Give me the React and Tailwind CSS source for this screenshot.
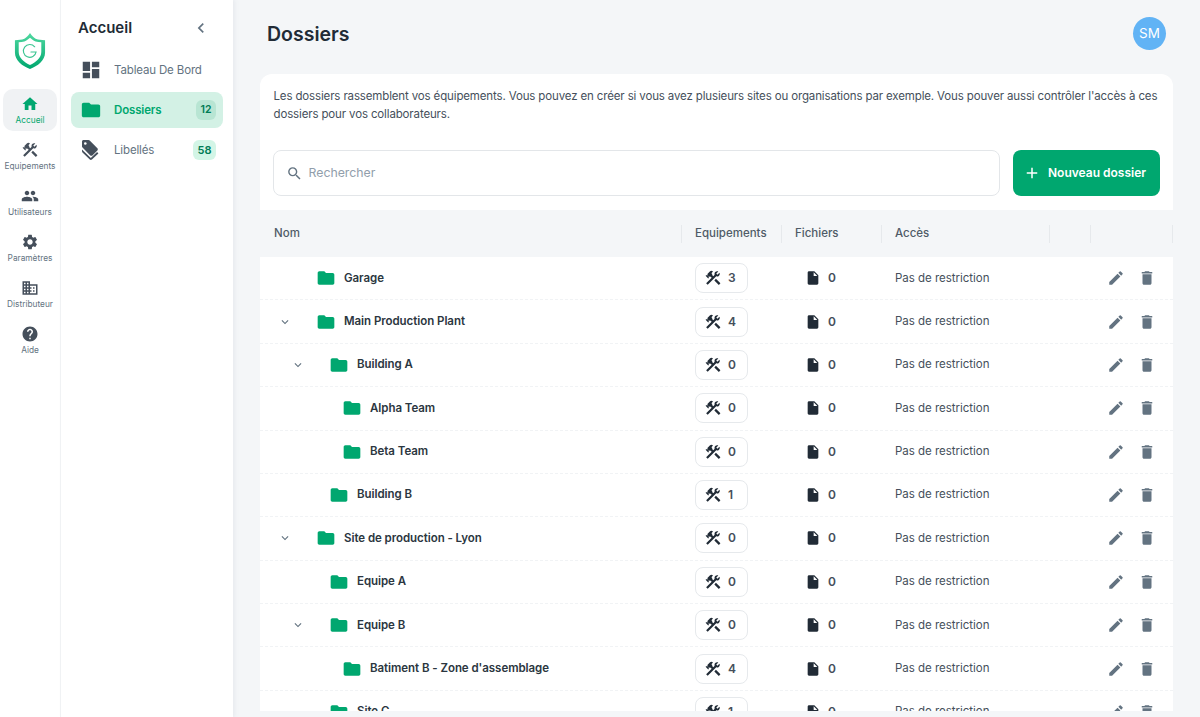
import React from "react";
import { MdHome, MdConstruction, MdPeople, MdSettings, MdDomain, MdHelp, MdDashboard, MdFolder, MdInsertDriveFile, MdEdit, MdDelete, MdSearch, MdAdd, MdExpandMore, MdChevronLeft } from "react-icons/md";

const rail = [
  [MdHome, "Accueil", true],
  [MdConstruction, "Equipements"],
  [MdPeople, "Utilisateurs"],
  [MdSettings, "Paramètres"],
  [MdDomain, "Distributeur"],
  [MdHelp, "Aide"],
];

const rows = [
  ["Garage", 0, false, 3],
  ["Main Production Plant", 0, true, 4],
  ["Building A", 1, true, 0],
  ["Alpha Team", 2, false, 0],
  ["Beta Team", 2, false, 0],
  ["Building B", 1, false, 1],
  ["Site de production - Lyon", 0, true, 0],
  ["Equipe A", 1, false, 0],
  ["Equipe B", 1, true, 0],
  ["Batiment B - Zone d'assemblage", 2, false, 4],
  ["Site C", 1, false, 1],
];

const indent = ["w-[56px]", "w-[69px]", "w-[82px]"];
const chevron = ["ml-[18px]", "ml-[31px]", "ml-[44px]"];
const gridCols = "grid grid-cols-[421px_100px_100px_168px_41px_83px]";

function Logo() {
  return (
    <svg width="32" height="38" viewBox="0 0 34 40" fill="none">
      <defs>
        <linearGradient id="lg" x1="0" y1="0" x2="0" y2="1">
          <stop offset="0" stopColor="#4fd8a0" />
          <stop offset="1" stopColor="#00a76f" />
        </linearGradient>
      </defs>
      <path d="M17 1c2 3 4 5 6 6 3 1.500 6 1 10 1.500v13C33 30 25 36 17 39 9 36 1 30 1 21.500v-13C5 8 8 8.500 11 7c2-1 4-3 6-6z" fill="url(#lg)" />
      <path d="M17 6c1.800 1.500 3.500 3 6 3.800 2 .6 4 .7 6 .8v10.400c0 6.500-6 11-12 13.800C11 32 5 27.500 5 21V10.600c2 -.1 4-.2 6-.8C13.500 9 15.200 7.500 17 6z" fill="#fff" />
      <path d="M22 15.500A6.800 6.800 0 1 0 23.500 21h-5.500" stroke="#3cc592" strokeWidth="1.200" strokeLinecap="round" />
    </svg>
  );
}

function TagsIcon() {
  return (
    <svg width="22" height="22" viewBox="0 0 22 22" fill="#454f5b">
      <path d="M2 2.500C2 1.700 2.700 1 3.500 1h5c.5 0 .9.200 1.200.5l7.700 7.800c.6.600.6 1.500 0 2.100l-5 5c-.6.600-1.500.600-2.100 0L2.500 8.600C2.200 8.300 2 7.900 2 7.500v-5z" />
      <circle cx="5.300" cy="4.500" r="1.300" fill="#fff" />
      <path d="M2 10.500v1.800c0 .4.200.8.500 1.100l7.300 7.200c.6.600 1.500.600 2.100 0l6.500-6.200-1.300-1.300-6.300 6L2 10.500z" />
    </svg>
  );
}

export default function App() {
  return (
    <div className="flex h-[717px] w-[1200px] overflow-hidden bg-[#f4f6f8] font-['Inter','Liberation_Sans',sans-serif] text-[#212b36]">
      <aside className="flex w-[61px] shrink-0 flex-col items-center border-r border-[#f1f3f5] bg-white">
        <div className="mt-[32px] mb-[19px] flex h-[38px] items-center justify-center"><Logo /></div>
        <nav className="flex flex-col gap-[4px]">
          {rail.map(([Icon, label, active]) => (
            <div key={label} className={`flex h-[42px] w-[54px] flex-col items-center justify-start rounded-[10px] pt-[6px] ${active ? "bg-[#f0f2f4] text-[#00a76f]" : "text-[#454f5b]"}`}>
              <Icon className="h-[18px] w-[18px] shrink-0" />
              <span className={`mt-[2px] whitespace-nowrap text-[8.300px] leading-[11px] ${active ? "text-[#00a76f]" : "text-[#637381]"}`}>{label}</span>
            </div>
          ))}
        </nav>
      </aside>

      <aside className="z-10 flex w-[172px] shrink-0 flex-col bg-white px-[10px] shadow-[2px_0_4px_rgba(145,158,171,0.12)]">
        <div className="flex h-[52px] items-center justify-between pl-[7px] pr-[12px] pt-[4px]">
          <h2 className="mb-[2px] text-[15px] font-semibold leading-none text-[#212b36]">Accueil</h2>
          <MdChevronLeft className="h-[20px] w-[20px] text-[#637381]" />
        </div>
        <div className="flex h-[36px] items-center px-[9px]">
          <MdDashboard className="h-[22px] w-[22px] shrink-0 text-[#454f5b]" />
          <span className="ml-[12px] mt-[2px] text-[11.500px] tracking-[-0.15px] text-[#637381]">Tableau De Bord</span>
        </div>
        <div className="mt-[4px] flex h-[36px] items-center rounded-[8px] bg-[#d3f1e5] pl-[9px] pr-[7px]">
          <MdFolder className="h-[22px] w-[22px] shrink-0 text-[#00a76f]" />
          <span className="ml-[12px] mt-[2px] flex-1 text-[11.500px] font-semibold tracking-[-0.15px] text-[#00a76f]">Dossiers</span>
          <span className="flex h-[20px] w-[20px] items-center justify-center rounded-[6px] bg-[#b8e5d3] text-[10.500px] font-semibold text-[#007b55]">12</span>
        </div>
        <div className="mt-[4px] flex h-[36px] items-center pl-[9px] pr-[7px]">
          <TagsIcon />
          <span className="ml-[12px] mt-[2px] flex-1 text-[11.500px] tracking-[-0.15px] text-[#637381]">Libellés</span>
          <span className="flex h-[20px] w-[23px] items-center justify-center rounded-[6px] bg-[#d3f5e6] text-[11px] font-semibold text-[#007b55]">58</span>
        </div>
      </aside>

      <main className="flex min-w-0 flex-1 flex-col pl-[27px] pr-[27px]">
        <header className="flex h-[74px] shrink-0 items-start justify-between">
          <h1 className="mt-[21px] pl-[7px] text-[19.500px] font-semibold leading-[26px] text-[#212b36]">Dossiers</h1>
          <div className="mr-[7px] mt-[17px] flex h-[33px] w-[33px] items-center justify-center rounded-full bg-[#61b3f5] text-[13.500px] font-normal text-white">SM</div>
        </header>

        <section className="h-[637px] w-[913px] shrink-0 overflow-hidden rounded-t-[12px] bg-white">
          <p className="pl-[13.500px] pr-[8px] pt-[13px] text-[11.500px] leading-[18px] tracking-[-0.14px] text-[#454f5b]">
            Les dossiers rassemblent vos équipements. Vous pouvez en créer si vous avez plusieurs sites ou organisations par exemple. Vous pouver aussi contrôler l'accès à ces dossiers pour vos collaborateurs.
          </p>
          <div className="mt-[27px] flex gap-[13px] px-[13px]">
            <div className="flex h-[46px] flex-1 items-center rounded-[8px] border border-[#e3e6e9] px-[12px]">
              <MdSearch className="h-[17px] w-[17px] text-[#637381]" />
              <span className="ml-[5.500px] text-[12.300px] text-[#919eab]">Rechercher</span>
            </div>
            <button className="flex h-[46px] w-[147px] items-center justify-start gap-[7px] rounded-[8px] bg-[#00a76f] pl-[10px] text-[12px] font-semibold text-white">
              <MdAdd className="h-[18px] w-[18px]" />
              Nouveau dossier
            </button>
          </div>

          <div className={`${gridCols} mt-[14px] h-[47px] items-center bg-[#f4f6f8] text-[11.500px] font-medium text-[#4f5b67]`}>
            {["Nom", "Equipements", "Fichiers", "Accès", "", ""].map((t, i) => (
              <div key={i} className="relative flex h-full items-center pl-[14px]">
                {t}
                <span className={`absolute top-[15px] h-[18px] w-px bg-[#e6e9ec] ${i === 5 ? "right-0" : "right-[-1px]"}`} />
              </div>
            ))}
          </div>

          <div>
            {rows.map(([name, level, expanded, count]) => (
              <div key={name} className={`${gridCols} relative h-[43.380px] items-center border-b border-dashed border-[#f1f3f5]`}>
                <div className="flex items-center">
                  {expanded && <MdExpandMore className={`absolute inset-y-0 my-auto ${chevron[level]} h-[14px] w-[14px] text-[#637381]`} />}
                  <div className={`${indent[level]} shrink-0`} />
                  <MdFolder className="h-[20px] w-[20px] shrink-0 text-[#00a76f]" />
                  <span className="ml-[8px] text-[11.500px] font-semibold tracking-[-0.05px] text-[#2b3640]">{name}</span>
                </div>
                <div className="pl-[14px]">
                  <div className="flex h-[30px] w-[53px] items-center justify-start gap-[6px] rounded-[8px] border border-[#e6e9ec] bg-white pl-[8px]">
                    <MdConstruction className="h-[18px] w-[18px] shrink-0 text-[#212b36]" />
                    <span className="text-[12px] font-semibold text-[#454f5b]">{count}</span>
                  </div>
                </div>
                <div className="flex items-center pl-[24px]">
                  <MdInsertDriveFile className="h-[16px] w-[16px] text-[#212b36]" />
                  <span className="ml-[7px] text-[12px] font-semibold text-[#454f5b]">0</span>
                </div>
                <div className="pl-[14px] text-[11.500px] tracking-[-0.02px] text-[#454f5b]">Pas de restriction</div>
                <div />
                <div className="flex items-center gap-[13px] pl-[17px]">
                  <MdEdit className="h-[18px] w-[18px] text-[#637381]" />
                  <MdDelete className="h-[18px] w-[18px] text-[#637381]" />
                </div>
              </div>
            ))}
          </div>
        </section>
      </main>
    </div>
  );
}
